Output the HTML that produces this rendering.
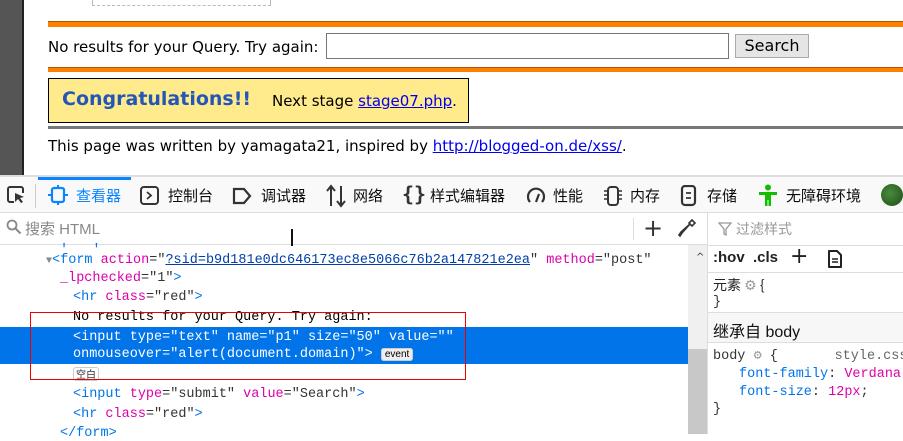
<!DOCTYPE html>
<html><head><meta charset="utf-8"><style>
*{margin:0;padding:0;box-sizing:border-box}
body{width:903px;height:434px;overflow:hidden;background:#fff;position:relative;font-family:"DejaVu Sans","Noto Sans CJK SC",sans-serif;}
.a{position:absolute;white-space:nowrap}
.pg{font-family:"DejaVu Sans","Noto Sans CJK SC",sans-serif;font-size:15px;color:#000}
.mono{font-family:"Liberation Mono","DejaVu Sans Mono",monospace;font-size:13.5px;color:#333}
.tg{color:#0074e8}.at{color:#dd00a9}.vl{color:#003eaa}
.tb{font-family:"Liberation Sans","Noto Sans CJK SC",sans-serif;font-size:15px;color:#0c0c0d;top:185px}
</style></head><body>
<div class="a" style="left:0;top:0;width:22px;height:176px;background:#555"></div>
<div class="a" style="left:22px;top:0;width:2px;height:176px;background:#222"></div>
<div class="a" style="left:92px;top:0;width:179px;height:6px;border:1px dashed #bbb;border-top:none"></div>
<div class="a" style="left:48px;top:21px;width:855px;height:6px;background:#ff8000;border-top:1px solid #b05800"></div>
<div class="a pg" style="left:48px;top:38px">No results for your Query. Try again:</div>
<div class="a" style="left:326px;top:33px;width:403px;height:26px;border:1px solid #777;background:#fff"></div>
<div class="a" style="left:735px;top:34px;width:74px;height:24px;border:1px solid #aaa;background:#e5e5e5;font-size:16px;text-align:center;line-height:22px;font-family:'DejaVu Sans',sans-serif">Search</div>
<div class="a" style="left:48px;top:67px;width:855px;height:5px;background:#ff8000;border-top:1px solid #b05800"></div>
<div class="a" style="left:48px;top:78px;width:421px;height:45px;background:#ffea8c;border:1px solid #000"></div>
<div class="a" style="left:62px;top:88px;font-family:'DejaVu Sans',sans-serif;font-weight:bold;font-size:19px;color:#2456b8">Congratulations!!</div>
<div class="a pg" style="left:272px;top:92px">Next stage <span style="color:#00e;text-decoration:underline">stage07.php</span>.</div>
<div class="a" style="left:48px;top:126px;width:855px;height:3px;background:#777"></div>
<div class="a pg" style="left:48px;top:137px">This page was written by yamagata21, inspired by <span style="color:#00e;text-decoration:underline">http://blogged-on.de/xss/</span>.</div>

<div class="a" style="left:0;top:175px;width:903px;height:2px;background:#ddd"></div>
<div class="a" style="left:0;top:177px;width:903px;height:36px;background:#f9f9fa;border-bottom:1px solid #ddd"></div>
<div class="a" style="left:38px;top:177px;width:93px;height:3px;background:#0a84ff"></div>
<svg class="a" style="left:6px;top:185px" width="20" height="20"><path d="M8 17H4a2 2 0 0 1-2-2V4a2 2 0 0 1 2-2h11a2 2 0 0 1 2 2v4" fill="none" stroke="#333" stroke-width="2"/><path d="M9 8l9 4-4 1 3 4-2 1-3-4-3 3z" fill="#333"/></svg>
<div class="a" style="left:35px;top:184px;width:1px;height:24px;background:#ccc"></div>
<svg class="a" style="left:48px;top:185px" width="20" height="20"><rect x="4" y="3" width="12" height="14" rx="2" fill="none" stroke="#0a84ff" stroke-width="2.2"/><path d="M10 0v3M10 17v3M0 10h4M16 10h4" stroke="#0a84ff" stroke-width="2"/></svg>
<div class="a tb" style="left:76px;color:#0a84ff">查看器</div>
<svg class="a" style="left:140px;top:186px" width="20" height="20"><rect x="1" y="1" width="17" height="17" rx="3" fill="none" stroke="#333" stroke-width="2"/><path d="M7 6l4 3.5L7 13" fill="none" stroke="#333" stroke-width="1.8"/></svg>
<div class="a tb" style="left:168px">控制台</div>
<svg class="a" style="left:232px;top:187px" width="20" height="18"><path d="M2 2h10l6 7-6 7H2z" fill="none" stroke="#333" stroke-width="2.2"/></svg>
<div class="a tb" style="left:261px">调试器</div>
<svg class="a" style="left:325px;top:184px" width="22" height="24"><path d="M6 22V3M2 7l4-5 4 5M16 2v19M12 17l4 5 4-5" fill="none" stroke="#333" stroke-width="2"/></svg>
<div class="a tb" style="left:353px">网络</div>
<div class="a" style="left:402px;top:182px;font-size:20px;color:#333;font-family:'DejaVu Sans Mono',monospace;font-weight:bold">{}</div>
<div class="a tb" style="left:430px">样式编辑器</div>
<svg class="a" style="left:525px;top:185px" width="22" height="22"><path d="M5 17A8 8 0 1 1 17 17" fill="none" stroke="#333" stroke-width="2.2"/><path d="M11 17l3-8" stroke="#333" stroke-width="2.2"/></svg>
<div class="a tb" style="left:553px">性能</div>
<svg class="a" style="left:602px;top:185px" width="22" height="22"><rect x="6" y="2" width="10" height="18" rx="3" fill="none" stroke="#333" stroke-width="2"/><path d="M2 6h3M2 10h3M2 14h3M17 6h3M17 10h3M17 14h3" stroke="#333" stroke-width="1.5"/></svg>
<div class="a tb" style="left:630px">内存</div>
<svg class="a" style="left:680px;top:185px" width="18" height="22"><rect x="2" y="1" width="13" height="19" rx="3" fill="none" stroke="#333" stroke-width="2.2"/><path d="M6 8h5M6 13h5" stroke="#333" stroke-width="1.8"/></svg>
<div class="a tb" style="left:707px">存储</div>
<svg class="a" style="left:757px;top:184px" width="22" height="24"><circle cx="11" cy="3.5" r="3" fill="#12bc00"/><path d="M2 8h18v3h-6v11h-2.5v-6h-1v6H8V11H2z" fill="#12bc00"/></svg>
<div class="a tb" style="left:786px">无障碍环境</div>
<div class="a" style="left:881px;top:184px;width:22px;height:22px;border-radius:50%;background:radial-gradient(circle at 40% 40%,#4a8a3a,#1e4e18)"></div>

<div class="a" style="left:0;top:213px;width:707px;height:32px;background:#fff;border-bottom:1px solid #ddd"></div>
<svg class="a" style="left:6px;top:219px" width="16" height="16"><circle cx="6" cy="6" r="4.5" fill="none" stroke="#888" stroke-width="1.8"/><path d="M9.5 9.5l5 5" stroke="#888" stroke-width="2"/></svg>
<div class="a" style="left:25px;top:218px;font-family:'Liberation Sans','Noto Sans CJK SC',sans-serif;font-size:15px;color:#888">搜索 HTML</div>
<div class="a" style="left:291px;top:229px;width:2px;height:17px;background:#111"></div>
<div class="a" style="left:633px;top:218px;width:1px;height:22px;background:#ddd"></div>
<div class="a" style="left:643px;top:214px;font-size:24px;color:#333;font-family:'DejaVu Sans',sans-serif">+</div>
<svg class="a" style="left:678px;top:218px" width="18" height="20"><path d="M14 2l3 3-3 3-2-2-8 9-2 3-1-1 2-3 9-8-1-1z" fill="none" stroke="#333" stroke-width="1.6"/></svg>

<div class="a" style="left:707px;top:213px;width:1px;height:221px;background:#ddd"></div>
<div class="a" style="left:688px;top:245px;width:19px;height:189px;background:#f0f0f0"></div>
<div class="a" style="left:688px;top:349px;width:19px;height:85px;background:#c8c8c8"></div>
<div class="a" style="left:696px;top:252px;font-size:10px;color:#333">^</div>

<div class="a" style="left:0;top:327px;width:688px;height:37px;background:#0074e8"></div>
<div class="a mono" style="left:60px;top:243px;color:#0074e8">' &nbsp;&nbsp;'</div>
<div class="a mono" style="left:46px;top:253px"><span style="color:#888;font-size:10px">▼</span><span class="tg">&lt;form</span> <span class="at">action</span>="<span class="vl" style="text-decoration:underline">?sid=b9d181e0dc646173ec8e5066c76b2a147821e2ea</span>" <span class="at">method</span>="post"</div>
<div class="a mono" style="left:60px;top:271px"><span class="at">_lpchecked</span>="1"<span class="tg">&gt;</span></div>
<div class="a mono" style="left:73px;top:290px"><span class="tg">&lt;hr</span> <span class="at">class</span>="red"<span class="tg">&gt;</span></div>
<div class="a mono" style="left:73px;top:310px;color:#000">No results for your Query. Try again:</div>
<div class="a mono" style="left:73px;top:330px;color:#fff">&lt;input type="text" name="p1" size="50" value=""</div>
<div class="a mono" style="left:73px;top:347px;color:#fff">onmouseover="alert(document.domain)"&gt; <span style="background:#eee;color:#000;font-family:'Liberation Sans',sans-serif;font-size:10px;border-radius:3px;padding:0 3px;border:1px solid #ccc">event</span></div>
<div class="a" style="left:73px;top:367px;border:1px solid #ccc;border-radius:3px;font-size:10px;padding:0 2px;font-family:'Noto Sans CJK SC',sans-serif;color:#333;line-height:12px">空白</div>
<div class="a mono" style="left:73px;top:387px"><span class="tg">&lt;input</span> <span class="at">type</span>="submit" <span class="at">value</span>="Search"<span class="tg">&gt;</span></div>
<div class="a mono" style="left:73px;top:407px"><span class="tg">&lt;hr</span> <span class="at">class</span>="red"<span class="tg">&gt;</span></div>
<div class="a mono" style="left:60px;top:426px"><span class="tg">&lt;/form&gt;</span></div>
<div class="a" style="left:30px;top:312px;width:436px;height:68px;border:1px solid #e00"></div>

<svg class="a" style="left:718px;top:222px" width="14" height="14"><path d="M1 1h12L8 7v6l-2-1V7z" fill="none" stroke="#999" stroke-width="1.3"/></svg>
<div class="a" style="left:736px;top:219px;font-family:'Noto Sans CJK SC',sans-serif;font-size:14px;color:#999">过滤样式</div>
<div class="a" style="left:708px;top:245px;width:195px;height:1px;background:#ddd"></div>
<div class="a" style="left:713px;top:249px;font-family:'Liberation Sans',sans-serif;font-weight:bold;font-size:15px;color:#222">:hov &nbsp;.cls</div>
<div class="a" style="left:790px;top:244px;font-size:22px;color:#222;font-family:'DejaVu Sans',sans-serif">+</div>
<svg class="a" style="left:827px;top:249px" width="16" height="20"><path d="M2 2h8l4 4v12H2z" fill="none" stroke="#222" stroke-width="2" stroke-linejoin="round"/><path d="M5 10h6M5 13h6" stroke="#222" stroke-width="1.4"/></svg>
<div class="a" style="left:708px;top:272px;width:195px;height:1px;background:#ddd"></div>
<div class="a" style="left:713px;top:275px;font-family:'Noto Sans CJK SC',sans-serif;font-size:14px;color:#222">元素 <span style="color:#999">⚙</span> {</div>
<div class="a mono" style="left:713px;top:295px">}</div>
<div class="a" style="left:708px;top:312px;width:195px;height:31px;background:#f7f7f7;border-top:1px solid #ddd;border-bottom:1px solid #ddd"></div>
<div class="a" style="left:713px;top:318px;font-family:'Liberation Sans','Noto Sans CJK SC',sans-serif;font-size:16px;color:#111">继承自 body</div>
<div class="a mono" style="left:713px;top:347px">body <span style="color:#999">⚙</span> { &nbsp;&nbsp;&nbsp;&nbsp;&nbsp;&nbsp;<span style="color:#666">style.css</span></div>
<div class="a mono" style="left:739px;top:367px"><span class="tg">font-family</span>: <span class="at">Verdana</span>;</div>
<div class="a mono" style="left:739px;top:385px"><span class="tg">font-size</span>: <span class="at">12px</span>;</div>
<div class="a mono" style="left:713px;top:402px">}</div>
</body></html>
